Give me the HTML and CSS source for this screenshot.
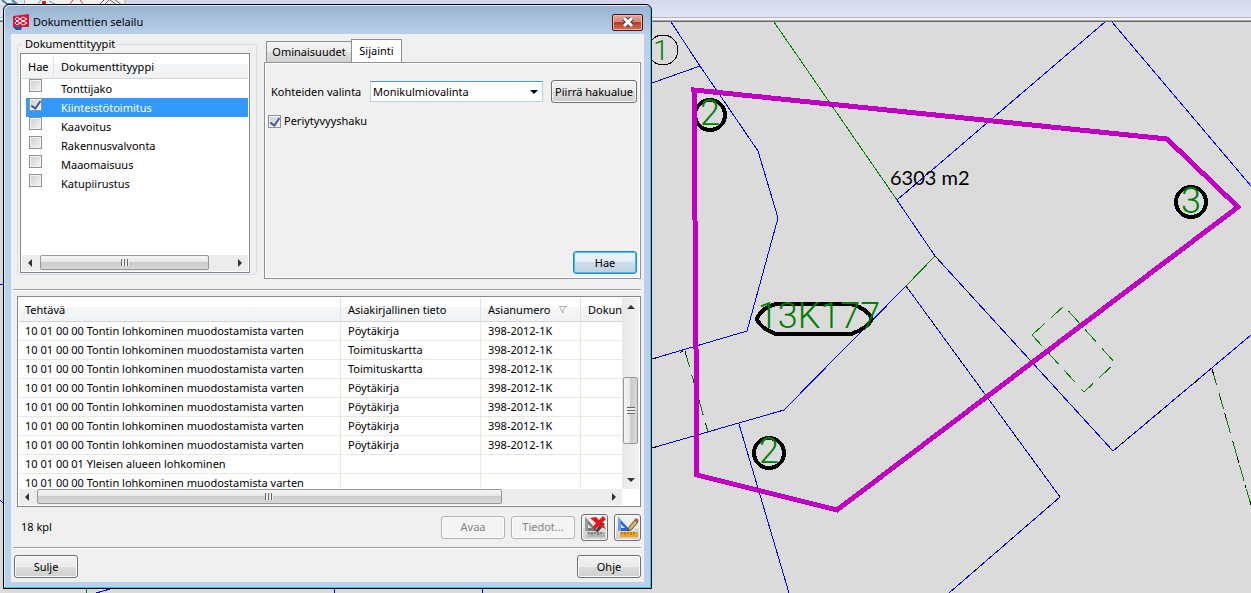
FILE: index.html
```html
<!DOCTYPE html>
<html lang="fi">
<head>
  <meta charset="UTF-8">
  <meta name="viewport" content="width=device-width, initial-scale=1.0">
  <title>Dokumenttien selailu</title>
  <link rel="stylesheet" href="styles.css">
</head>
<body>
  <div class="toolbar">
    <svg class="toolbar-icons" viewBox="0 0 126 5" width="126" height="5">
      <rect width="25" height="5" fill="#e4e9ee"/>
      <path d="M2 0l5 4h8M12 0l6 5" stroke="#4d7f9e" stroke-width="2" fill="none"/>
      <path d="M24.500 0V5M125 0V5" stroke="#a8a8a8"/>
      <path d="M41 0l-4 5M49 1l8 4" stroke="#4aa3d8" fill="none"/>
      <rect x="42" y="1" width="4" height="4" fill="#e02010"/>
      <path d="M73 0l-4 5M80 0l4 5" stroke="#d04040" fill="none"/>
      <path d="M104 0l-5 5M109 0l-5 5M110 0l7 5M115 0l7 5" stroke="#666" fill="none"/>
    </svg>
  </div>

  <svg class="map" viewBox="0 22 1251 571" preserveAspectRatio="xMinYMin slice">
    <!-- parcel borders -->
    <g class="parcel">
      <path d="M671 22L700 66L758 151L778 218L747 331L652 359"/>
      <path d="M652 83L700 66"/>
      <path d="M897 200L935 256L1113 451L1251 335"/>
      <path d="M897 200L1105 22M1112 22L1251 186"/>
      <path d="M906 286L784 410L652 448"/>
      <path d="M906 286L1060 497L949 593"/>
      <path d="M739 424L789 593"/>
      <path d="M0 284H4M0 500l4 4M96 593l14-4M334 588v5M482 588v5"/>
    </g>
    <g class="overlap">
      <path d="M652 359L685 351M652 448L708 432"/>
      <path d="M906 286L1060 497L949 593"/>
      <path d="M935 256L1113 451L1211 369"/>
    </g>
    <g class="green">
      <path d="M774 22L897 200M935 256L906 286M86 588v5"/>
      <path class="dashed" d="M1032 335L1064 306L1115 363L1084 392Z"/>
      <path class="dashed" d="M1212 369L1251 505"/>
      <path class="dashed" d="M685 351L708 432"/>
    </g>
    <g class="overlap">
      <path d="M685 351L708 432M1212 369L1251 505"/>
    </g>

    <!-- plot numbers -->
    <circle class="ring thin" cx="663" cy="50" r="15"/>
    <circle class="ring" cx="710" cy="115" r="15"/>
    <circle class="ring" cx="1191" cy="202" r="15"/>
    <circle class="ring" cx="769" cy="453" r="15"/>
    <path class="ring" d="M776 304H851Q868 309 872 319Q868 328 851 334H776Q760 328 757 319Q761 308 776 304Z"/>
    <text class="num small" x="661" y="60">1</text>
    <text class="num" x="710" y="125">2</text>
    <text class="num" x="1191" y="213">3</text>
    <text class="num" x="769" y="463">2</text>
    <text class="num" x="819" y="328">13K177</text>
    <text class="area" x="890" y="185">6303 m2</text>

    <!-- search area -->
    <path class="search-area" d="M694 90L1167 139L1238 207L837 510L697 475Z"/>
  </svg>

  <div class="dialog" role="dialog" aria-labelledby="title">
    <div class="titlebar">
      <svg class="logo" viewBox="0 0 16 16" width="16" height="16">
        <path d="M0 2l16-2v13H0z" fill="#dc1440"/>
        <path d="M0 13h9l-1 3H3z" fill="#2456a8"/>
        <path d="M2 5l2-2 3 2 3-2 4 2-4 2-3-2-3 2zM2 9l2-2 3 2 3-2 4 2-4 2-3-2-3 2z" stroke="#fff" fill="none"/>
      </svg>
      <span class="title" id="title">Dokumenttien selailu</span>
      <button class="close" aria-label="Sulje ikkuna">
        <svg viewBox="0 0 12 10" width="12" height="10">
          <path d="M2 1l8 8M10 1l-8 8" stroke="#5a3440" stroke-width="5"/>
          <path d="M2 1l8 8M10 1l-8 8" stroke="#fff" stroke-width="3"/>
        </svg>
      </button>
    </div>

    <div class="client">
      <div class="top">
        <fieldset class="group">
          <legend>Dokumenttityypit</legend>
          <div class="listbox types">
            <table class="type-table">
              <thead><tr><th>Hae</th><th>Dokumenttityyppi</th></tr></thead>
              <tbody>
                <tr><td><input type="checkbox" id="t1"></td><td><label for="t1">Tonttijako</label></td></tr>
                <tr class="selected"><td><input type="checkbox" id="t2" checked></td><td><label for="t2">Kiinteistötoimitus</label></td></tr>
                <tr><td><input type="checkbox" id="t3"></td><td><label for="t3">Kaavoitus</label></td></tr>
                <tr><td><input type="checkbox" id="t4"></td><td><label for="t4">Rakennusvalvonta</label></td></tr>
                <tr><td><input type="checkbox" id="t5"></td><td><label for="t5">Maaomaisuus</label></td></tr>
                <tr><td><input type="checkbox" id="t6"></td><td><label for="t6">Katupiirustus</label></td></tr>
              </tbody>
            </table>
            <div class="hscroll">
              <i class="arrow left"></i>
              <div class="track"><div class="thumb short"><i class="grip"></i></div></div>
              <i class="arrow right"></i>
            </div>
          </div>
        </fieldset>

        <div class="tabs">
          <div class="tablist" role="tablist">
            <button class="tab" role="tab">Ominaisuudet</button>
            <button class="tab active" role="tab" aria-selected="true">Sijainti</button>
          </div>
          <div class="panel" role="tabpanel">
            <div class="row">
              <label class="row-label" for="valinta">Kohteiden valinta</label>
              <div class="combo">
                <select id="valinta"><option>Monikulmiovalinta</option></select>
              </div>
              <button class="btn wide">Piirrä hakualue</button>
            </div>
            <div class="check-row">
              <input type="checkbox" id="periytyvyys" checked>
              <label for="periytyvyys">Periytyvyyshaku</label>
            </div>
            <button class="btn default">Hae</button>
          </div>
        </div>
      </div>

      <hr>

      <div class="listbox results">
        <div class="results-main">
          <div class="results-view">
            <table class="result-table">
              <colgroup><col class="c-task"><col class="c-info"><col class="c-num"><col class="c-doc"></colgroup>
              <thead>
                <tr>
                  <th>Tehtävä</th>
                  <th>Asiakirjallinen tieto</th>
                  <th>Asianumero
                    <svg class="sort" viewBox="0 0 9 8" width="9" height="8"><path d="M0 .5h8M1 1l3 6V4l3-3" stroke="#b4b4b4" fill="none"/></svg>
                  </th>
                  <th>Dokun</th>
                </tr>
              </thead>
              <tbody>
                <tr><td>10 01 00 00 Tontin lohkominen muodostamista varten</td><td>Pöytäkirja</td><td>398-2012-1K</td><td></td></tr>
                <tr><td>10 01 00 00 Tontin lohkominen muodostamista varten</td><td>Toimituskartta</td><td>398-2012-1K</td><td></td></tr>
                <tr><td>10 01 00 00 Tontin lohkominen muodostamista varten</td><td>Toimituskartta</td><td>398-2012-1K</td><td></td></tr>
                <tr><td>10 01 00 00 Tontin lohkominen muodostamista varten</td><td>Pöytäkirja</td><td>398-2012-1K</td><td></td></tr>
                <tr><td>10 01 00 00 Tontin lohkominen muodostamista varten</td><td>Pöytäkirja</td><td>398-2012-1K</td><td></td></tr>
                <tr><td>10 01 00 00 Tontin lohkominen muodostamista varten</td><td>Pöytäkirja</td><td>398-2012-1K</td><td></td></tr>
                <tr><td>10 01 00 00 Tontin lohkominen muodostamista varten</td><td>Pöytäkirja</td><td>398-2012-1K</td><td></td></tr>
                <tr><td>10 01 00 01 Yleisen alueen lohkominen</td><td></td><td></td><td></td></tr>
                <tr><td>10 01 00 00 Tontin lohkominen muodostamista varten</td><td></td><td></td><td></td></tr>
              </tbody>
            </table>
          </div>
          <div class="vscroll">
            <i class="arrow up"></i>
            <div class="vthumb"><i class="grip flat"></i></div>
            <i class="arrow down"></i>
          </div>
        </div>
        <div class="hscroll corner">
          <i class="arrow left"></i>
          <div class="track"><div class="thumb long"><i class="grip"></i></div></div>
          <i class="arrow right"></i>
        </div>
      </div>

      <div class="actions">
        <span class="count">18 kpl</span>
        <button class="btn" disabled>Avaa</button>
        <button class="btn" disabled>Tiedot...</button>
        <button class="btn icon" aria-label="Poista hakualue">
          <svg viewBox="0 0 22 22" width="22" height="22">
            <path d="M1 1v14h13z" fill="#777"/>
            <path d="M1 1v14h3V4z" fill="#999"/>
            <path d="M4 8v4h4z" fill="#ddd"/>
            <path d="M11 15l7-9 3 2-7 8z" fill="#444"/>
            <path d="M6 2l6-1 3 3 4-4 3 3-4 4 4 6-7-3-5 4-1-3 3-4z" fill="#e01818"/>
            <rect x="3" y="16" width="18" height="5" fill="#b4b4b4"/>
            <path d="M5 16v2M8 16v3M11 16v2M14 16v3M17 16v2" stroke="#555"/>
          </svg>
        </button>
        <button class="btn icon" aria-label="Muokkaa hakualuetta">
          <svg viewBox="0 0 22 22" width="22" height="22">
            <path d="M1 1v14h13z" fill="#2c62d0"/>
            <path d="M1 1v14h3V4z" fill="#6c9cec"/>
            <path d="M4 8v4h4z" fill="#cfe0fa"/>
            <path d="M11 15l1-4 6-7 3 2-6 7z" fill="#d8bc58" stroke="#5a4a28"/>
            <path d="M17 4l2-2 3 2-2 3z" fill="#b06048"/>
            <rect x="3" y="16" width="18" height="5" fill="#f0a420"/>
            <path d="M5 16v2M8 16v3M11 16v2M14 16v3M17 16v2" stroke="#8a5808"/>
          </svg>
        </button>
      </div>

      <hr>

      <div class="footer">
        <button class="btn">Sulje</button>
        <button class="btn">Ohje</button>
      </div>
    </div>
  </div>
</body>
</html>
```
FILE: styles.css
```css
* { box-sizing: border-box; }
body { margin: 0; height: 100vh; display: flex; flex-direction: column; overflow: hidden; background: #dbdbdb; font-family: "Noto Sans", "Open Sans", sans-serif; font-size: 11px; line-height: 18px; color: #000; }
button, select, input { font: inherit; color: inherit; margin: 0; }

/* map */
.toolbar { flex: none; height: 22px; background: linear-gradient(#d3d8ec, #dfe4f5 17px, #b4b4c0 17px, #b4b4c0 18px, #f4f4f4 18px, #f4f4f4 20px, #a8a8a8 20px, #a8a8a8 21px, #686868 21px); }
.toolbar-icons { display: block; background: #f0f0f0; }
.map { flex: 1; width: 100%; min-height: 0; background: #dbdbdb; fill: none; shape-rendering: crispEdges; }
.parcel { stroke: #0000f0; }
.overlap { stroke: #000; stroke-dasharray: 6 23 3 14; }
.green { stroke: #008000; }
.dashed { stroke-dasharray: 17 8; }
.ring { stroke: #000; stroke-width: 4; }
.thin { stroke-width: 1; }
.num { fill: #008000; font-family: Roboto, sans-serif; font-size: 36px; font-weight: 300; text-anchor: middle; }
.small { font-size: 28px; }
.area { fill: #000; font-family: Lato, sans-serif; font-size: 20px; font-weight: 400; }
.search-area { stroke: #c000c0; stroke-width: 5; }

/* window */
.dialog { position: absolute; left: 3px; top: 4px; width: 649px; padding: 0 7px; background: linear-gradient(#98b2d0, #b9d1ea 30px); border: 1px solid #000; border-radius: 6px 6px 0 0; box-shadow: inset -1px -1px #35c8f0, inset 1px 1px #d8e8f6; }
.titlebar { display: flex; align-items: center; height: 29px; gap: 4px; padding: 5px 1px 0 2px; }
.title { flex: 1; }
.close { display: flex; align-items: center; justify-content: center; width: 31px; height: 17px; padding: 0; border: 1px solid #4c1018; border-radius: 2px; background: linear-gradient(#e4a89c, #d08478 50%, #b83c24 50%, #d07058); box-shadow: inset 0 0 0 1px #f0b8b0; }
.client { display: flex; flex-direction: column; background: #f0f0f0; margin-bottom: 6px; padding: 0 3px 4px 2px; }
hr { width: 100%; height: 2px; margin: 0; border: 0; background: #fff; border-top: 1px solid #a0a0a0; }

.top { display: flex; align-items: flex-start; gap: 7px; padding: 1px 0 10px 4px; }
.group { flex: none; width: 240px; margin: 0; padding: 0 6px 1px 2px; border: 1px solid #d5dfe5; border-radius: 3px; }
.group legend { padding: 0 3px; margin-left: 2px; }
.listbox { display: flex; flex-direction: column; background: #fff; border: 1px solid #828790; padding: 1px; }
.types { height: 220px; justify-content: space-between; }
table { border-spacing: 0; table-layout: fixed; }
th { height: 24px; padding: 0 7px; text-align: left; font-weight: normal; background: linear-gradient(#fff 40%, #f5f6f8 40%, #f1f2f4); border-bottom: 1px solid #d5d5d5; border-right: 1px solid #e2e3ea; white-space: nowrap; }
.type-table { width: 100%; }
.type-table th:first-child { width: 32px; padding: 0 6px; }
.type-table th:last-child { border-right: 0; }
.type-table td { height: 19px; padding: 1px 7px 0; line-height: 17px; vertical-align: top; }
.type-table td:first-child { border-left: 4px solid #fff; padding: 0 3px; }
.selected td { background: #3399ff; color: #fff; }
input[type="checkbox"] { appearance: none; display: block; flex: none; position: relative; width: 13px; height: 13px; border: 1px solid #8e8f8f; background: linear-gradient(135deg, #c8ccd2, #f6f6f6); box-shadow: inset 0 0 0 1px #f4f4f4; }
input[type="checkbox"]:checked::after { content: ""; position: absolute; left: 3px; top: 0; width: 4px; height: 8px; border: solid #3f5a9a; border-width: 0 2px 2px 0; transform: rotate(35deg); }

/* scroll bars */
.hscroll { display: flex; align-items: center; height: 16px; padding: 0 6px; gap: 8px; background: #ececec; }
.track { flex: 1; height: 100%; }
.thumb { display: flex; align-items: center; justify-content: center; height: 15px; border: 1px solid #979797; border-radius: 2px; background: linear-gradient(#f4f4f4, #e8e8e8 45%, #ccccd0 50%, #d8d8d8); }
.short { width: 89%; }
.long { width: 82%; }
.corner { margin-right: 17px; }
.grip { width: 8px; height: 7px; background: repeating-linear-gradient(90deg, #666 0 1px, #eee 1px 3px); }
.flat { background: repeating-linear-gradient(#666 0 1px, #eee 1px 3px); }
.arrow { width: 0; height: 0; border: 4px solid transparent; }
.left { border-width: 4px 4px 4px 0; border-right-color: #333; }
.right { border-width: 4px 0 4px 4px; border-left-color: #333; }
.up { border-width: 0 4px 4px; border-bottom-color: #333; }
.down { border-width: 4px 4px 0; border-top-color: #333; }
.vscroll { display: flex; flex-direction: column; align-items: center; width: 17px; padding: 7px 0; background: linear-gradient(90deg, #e8e8e8, #f2f2f2); }
.vthumb { display: flex; align-items: center; justify-content: center; width: 15px; height: 67px; margin: auto 0 34px; border: 1px solid #979797; border-radius: 2px; background: linear-gradient(90deg, #f4f4f4, #e8e8e8 45%, #ccccd0 50%, #d8d8d8); }

/* tabs */
.tabs { flex: 1; display: flex; flex-direction: column; min-height: 244px; padding-top: 4px; }
.tablist { display: flex; align-items: flex-end; padding-left: 2px; height: 23px; }
.tab { width: 86px; height: 21px; padding: 0; border: 1px solid #8b8f98; border-bottom: 0; background: linear-gradient(#f3f3f3, #ececec 50%, #dedede 50%, #d2d2d2); white-space: nowrap; }
.active { width: 51px; height: 23px; margin-left: -1px; background: #fff; }
.panel { flex: 1; display: flex; flex-direction: column; padding: 17px 3px 4px 6px; border: 1px solid #8b9298; box-shadow: inset 0 0 0 1px #fff; }
.row { display: flex; align-items: center; gap: 8px; }
.row-label { flex: 1; white-space: nowrap; }
.combo { position: relative; width: 173px; }
.combo::after { content: ""; position: absolute; right: 5px; top: 9px; border: 4px solid transparent; border-top-color: #000; border-bottom: 0; pointer-events: none; }
select { appearance: none; display: block; width: 100%; height: 21px; padding: 0 2px; border: 1px solid #b5d2e8; border-top-color: #4f93c0; border-radius: 0; background: #fff; line-height: 18px; }
.check-row { display: flex; align-items: center; gap: 3px; padding-top: 9px; margin-left: -3px; }
.btn { display: flex; align-items: center; justify-content: center; width: 64px; height: 23px; padding: 0; border: 1px solid #707070; border-radius: 3px; background: linear-gradient(#f2f2f2, #ebebeb 50%, #dddddd 50%, #cfcfcf); box-shadow: inset 0 0 0 1px #fbfbfb; white-space: nowrap; }
.btn:disabled { color: #838383; border-color: #adb2b5; background: #f4f4f4; }
.wide { width: 86px; }
.default { margin: auto 0 0 auto; border-color: #3c7fb1; background: linear-gradient(#eef5f9, #e2edf3 50%, #cbdde8 50%, #bfd4e0); box-shadow: inset 0 0 0 1px #35c5f5; }
.icon { width: 27px; height: 27px; }

/* results */
.results { margin: 5px 0 0 4px; height: 211px; }
.results-main { flex: 1; display: flex; min-height: 0; }
.results-view { flex: 1; min-width: 0; overflow: hidden; }
.result-table { width: 642px; }
.c-task { width: 322px; }
.c-info { width: 140px; }
.c-num { width: 100px; }
.c-doc { width: 80px; }
.result-table td { height: 19px; padding: 0 7px; line-height: 18px; border-right: 1px solid #e8e8dc; border-bottom: 1px solid #e8e8dc; white-space: nowrap; }
.result-table td:first-child, .result-table th:first-child { padding: 0 6px; }
.sort { margin-left: 6px; }

.actions { display: flex; align-items: center; gap: 6px; height: 40px; padding-left: 8px; }
.count { flex: 1; }
.footer { display: flex; justify-content: space-between; padding: 6px 0 0 1px; }
```
